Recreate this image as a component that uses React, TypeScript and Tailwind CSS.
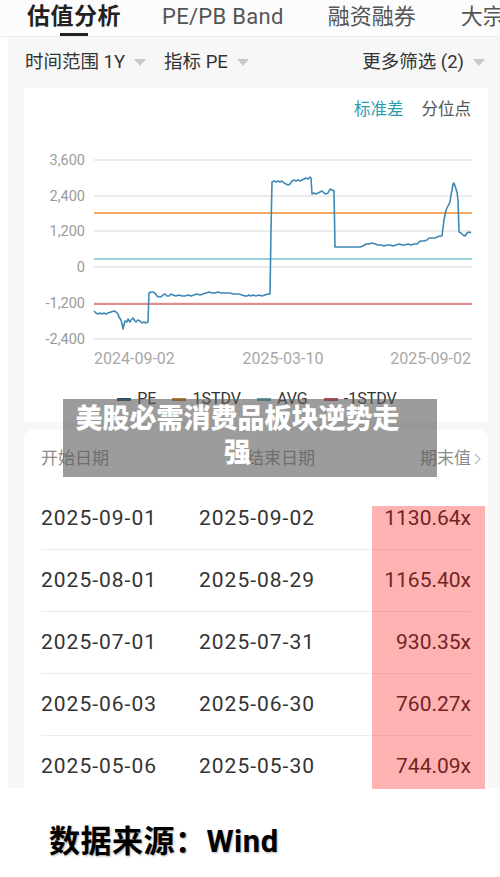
import React from 'react';

const pe: [number, number][] = [
  [94, 311], [96, 313], [98, 314], [100, 313], [102, 314], [104, 313], [106, 314], [108, 313], [111, 312], [114, 311],
  [116, 312], [118, 314], [119, 317], [121, 320], [122, 324], [123, 329], [124, 325], [125, 321], [127, 322], [128, 319],
  [130, 322], [131, 320], [133, 318], [135, 321], [136, 322], [138, 320], [140, 321], [142, 323], [144, 322], [146, 323],
  [148, 322], [149, 293], [151, 292], [153, 292], [155, 293], [157, 296], [159, 297], [161, 297], [163, 295], [165, 294],
  [167, 296], [169, 296], [171, 294], [173, 295], [176, 296], [179, 295], [182, 296], [185, 296], [188, 295], [191, 296],
  [194, 295], [197, 294], [200, 295], [203, 294], [206, 293], [209, 292], [212, 293], [215, 293], [218, 292], [221, 293],
  [224, 293], [227, 293], [230, 293], [233, 294], [236, 294], [239, 294], [242, 295], [245, 296], [247, 296], [249, 295],
  [251, 296], [253, 295], [256, 296], [259, 295], [262, 296], [265, 295], [268, 294], [270, 294], [271, 230], [272, 182],
  [274, 181], [276, 182], [278, 181], [280, 182], [282, 181], [284, 183], [286, 184], [288, 185], [290, 184], [292, 181],
  [294, 180], [296, 181], [298, 180], [300, 181], [302, 180], [304, 179], [306, 178], [308, 179], [310, 177], [311, 178],
  [312, 194], [314, 193], [316, 194], [318, 193], [320, 192], [322, 191], [324, 193], [326, 194], [328, 193], [330, 189],
  [332, 190], [334, 191], [335, 247], [340, 247], [345, 247], [350, 247], [355, 247], [360, 247], [363, 246], [366, 244],
  [369, 244], [372, 243], [375, 244], [378, 245], [381, 245], [384, 246], [387, 245], [390, 245], [393, 246], [396, 245],
  [399, 244], [402, 245], [405, 245], [408, 244], [411, 245], [414, 244], [417, 244], [419, 242], [421, 241], [424, 241],
  [427, 240], [429, 238], [432, 238], [435, 238], [437, 237], [440, 236], [442, 236], [444, 220], [446, 210], [448, 206],
  [450, 202], [451, 195], [452, 190], [453, 184], [454, 183], [455, 186], [457, 192], [458, 200], [459, 232], [461, 233],
  [463, 235], [465, 236], [467, 233], [469, 232], [471, 233],
];

const yTicks = [
  { label: '3,600', y: 160 },
  { label: '2,400', y: 196 },
  { label: '1,200', y: 231 },
  { label: '0', y: 267 },
  { label: '-1,200', y: 303 },
  { label: '-2,400', y: 339 },
];

const rows = [
  ['2025-09-01', '2025-09-02', '1130.64x'],
  ['2025-08-01', '2025-08-29', '1165.40x'],
  ['2025-07-01', '2025-07-31', '930.35x'],
  ['2025-06-03', '2025-06-30', '760.27x'],
  ['2025-05-06', '2025-05-30', '744.09x'],
];

const legend = [
  { name: 'PE', color: 'bg-[#1f4e6e]' },
  { name: '1STDV', color: 'bg-[#c0782a]' },
  { name: 'AVG', color: 'bg-[#5aa5ad]' },
  { name: '-1STDV', color: 'bg-[#c04848]' },
];

const Caret = () => (
  <svg width="12" height="7" viewBox="0 0 12 7" className="ml-[9px]">
    <polygon points="0,0 12,0 6,7" fill="#c9c9c9" />
  </svg>
);

export default function App() {
  return (
    <div className="relative w-[500px] h-[877px] overflow-hidden bg-white font-['Roboto','Noto_Sans_CJK_SC',sans-serif]">
      {/* tabs */}
      <div className="h-[37px] flex items-start bg-[#fcfcfc] border-b border-[#ededed] whitespace-nowrap">
        <div className="ml-[27px] flex flex-col items-center">
          <span className="text-[23px] leading-[34px] font-bold text-[#222] tracking-[0.5px]">估值分析</span>
          <span className="w-[28px] h-[3px] bg-[#222] -mt-[1px]" />
        </div>
        <span className="ml-[41px] text-[22px] leading-[34px] text-[#555] tracking-[0.3px]">PE/PB Band</span>
        <span className="ml-[44px] text-[22px] leading-[34px] text-[#555]">融资融券</span>
        <span className="ml-[45px] text-[22px] leading-[34px] text-[#555]">大宗交易</span>
      </div>

      {/* main grey area */}
      <div className="ml-[8px] h-[751px] bg-[#f7f7f7] overflow-hidden">
        <div className="h-[51px] flex items-center pl-[17px] pr-[15px] text-[18.5px] text-[#333]">
          <span>时间范围 1Y</span>
          <Caret />
          <span className="ml-[18px]">指标 PE</span>
          <Caret />
          <span className="ml-auto">更多筛选 (2)</span>
          <Caret />
        </div>

        {/* chart card */}
        <div className="ml-[16px] mr-[12px] h-[334px] bg-white">
          <div className="h-[52px] flex justify-end items-start pt-[11px] pr-[17px] gap-[18px] text-[16.5px] leading-[22px]">
            <span className="text-[#2a9db0]">标准差</span>
            <span className="text-[#555]">分位点</span>
          </div>
          <svg width="464" height="235" viewBox="24 140 464 235" className="block">
            {yTicks.map((t) => (
              <g key={t.label}>
                <line x1="94" x2="472" y1={t.y} y2={t.y} stroke="#e6e6e6" strokeWidth="1.5" />
                <text x="85" y={t.y + 5} textAnchor="end" fontSize="14.5" fill="#9a9a9a" fontFamily="Roboto, sans-serif">
                  {t.label}
                </text>
              </g>
            ))}
            <line x1="94" x2="472" y1="213" y2="213" stroke="#f28c28" strokeWidth="1.6" />
            <line x1="94" x2="472" y1="259" y2="259" stroke="#93d3d9" strokeWidth="2" />
            <line x1="94" x2="472" y1="304" y2="304" stroke="#e98a8a" strokeWidth="2" />
            <polyline
              points={pe.map((p) => p.join(',')).join(' ')}
              fill="none"
              stroke="#3f88b5"
              strokeWidth="1.6"
              strokeLinejoin="round"
            />
            <text x="94" y="364" fontSize="16" fill="#a8a8a8" fontFamily="Roboto, sans-serif">2024-09-02</text>
            <text x="283" y="364" textAnchor="middle" fontSize="16" fill="#a8a8a8" fontFamily="Roboto, sans-serif">2025-03-10</text>
            <text x="471" y="364" textAnchor="end" fontSize="16" fill="#a8a8a8" fontFamily="Roboto, sans-serif">2025-09-02</text>
          </svg>
          <div className="h-[48px] flex items-center justify-center gap-[16px] text-[16px] text-[#333] pl-[2px]">
            {legend.map((l) => (
              <div key={l.name} className="flex items-center gap-[6px]">
                <span className={`w-[14px] h-[3px] ${l.color}`} />
                <span>{l.name}</span>
              </div>
            ))}
          </div>
        </div>

        {/* table card */}
        <div className="mt-[8px] ml-[16px] mr-[12px] bg-white rounded-t-[8px] px-[17px]">
          <div className="h-[58px] flex items-center text-[17px] text-[#8c8c8c]">
            <span className="w-[140px]">开始日期</span>
            <span className="w-[134px] text-right">结束日期</span>
            <span className="ml-auto">期末值</span>
            <svg width="12" height="16" viewBox="0 0 12 16" className="-mr-[12px]">
              <polyline points="4,3 9,8 4,13" fill="none" stroke="#bdbdbd" strokeWidth="1.3" />
            </svg>
          </div>
          {rows.map((r, i) => (
            <div
              key={r[0]}
              className={`h-[62px] flex items-center text-[21px] text-[#333] ${i < rows.length - 1 ? 'border-b border-[#ececec]' : ''}`}
            >
              <span className="w-[140px] tracking-[1px]">{r[0]}</span>
              <span className="w-[134px] text-right tracking-[1px]">{r[1]}</span>
              <span className="ml-auto">{r[2]}</span>
            </div>
          ))}
        </div>
      </div>

      {/* caption */}
      <div className="mt-[34px] pl-[49px] text-[31px] leading-[40px] font-bold text-black tracking-[0.5px] [text-shadow:1px_1px_2px_rgba(0,0,0,0.3)]">
        数据来源：Wind
      </div>

      {/* highlight over the value column */}
      <div className="absolute left-[372px] top-[506px] w-[113px] h-[283px] bg-[#ff0000]/30" />

      {/* headline overlay */}
      <div className="absolute left-[63px] top-[399px] w-[374px] h-[78px] bg-[#5a5a5a]/60 pl-[12px] pt-[1px]">
        <div className="w-[325px] text-center text-[27px] leading-[34px] font-black text-white font-['Noto_Sans_CJK_SC',sans-serif]">
          美股必需消费品板块逆势走强
        </div>
      </div>
    </div>
  );
}
